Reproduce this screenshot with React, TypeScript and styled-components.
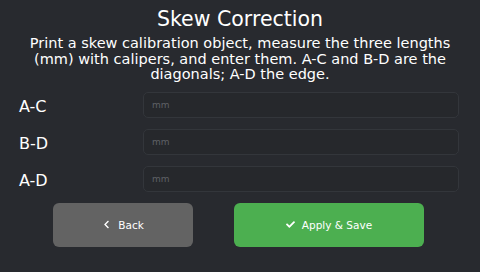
import React, { useState } from "react";
import styled, { createGlobalStyle } from "styled-components";
import { FaCheck, FaChevronLeft } from "react-icons/fa";

const GlobalStyle = createGlobalStyle`
  html, body {
    margin: 0;
    padding: 0;
    background: #282a2f;
    font-family: "DejaVu Sans", "Noto Sans", sans-serif;
    color: #ffffff;
  }
`;

const Screen = styled.div`
  width: 480px;
  height: 272px;
  box-sizing: border-box;
  display: flex;
  flex-direction: column;
  align-items: stretch;
  padding-top: 7px;
  overflow: hidden;
`;

const Title = styled.h1`
  margin: 0;
  font-size: 20.5px;
  font-weight: 400;
  line-height: 24px;
  text-align: center;
`;

const Description = styled.p`
  margin: 5px 0 0;
  padding: 0 24px;
  font-size: 14.5px;
  line-height: 15.6px;
  text-align: center;
`;

const Form = styled.div`
  display: grid;
  grid-template-columns: 124px 1fr;
  row-gap: 11px;
  align-items: center;
  padding: 0 21px 0 19px;
  margin-top: 9px;
`;

const Label = styled.label`
  font-size: 16px;
  padding-top: 4px;
`;

const Field = styled.input`
  box-sizing: border-box;
  height: 26px;
  width: 100%;
  background: #26282c;
  border: 1px solid #33363b;
  border-radius: 5px;
  padding: 0 8px;
  color: #ffffff;
  font-family: inherit;
  font-size: 9px;
  outline: none;

  &::placeholder {
    color: #5f6166;
  }
`;

const Actions = styled.div`
  display: flex;
  justify-content: center;
  gap: 41px;
  margin-top: 11px;
  padding-right: 3px;
`;

const Button = styled.button<{ $tone: "grey" | "green"; $width: number }>`
  width: ${(p) => p.$width}px;
  height: 44px;
  border: none;
  border-radius: 6px;
  background: ${(p) => (p.$tone === "green" ? "#4caf50" : "#636363")};
  color: #ffffff;
  font-family: inherit;
  font-size: 10.5px;
  display: flex;
  align-items: center;
  justify-content: center;
  gap: 7px;

  svg {
    width: 9px;
    height: 9px;
  }
`;

const fields = [
  { id: "ac", label: "A-C" },
  { id: "bd", label: "B-D" },
  { id: "ad", label: "A-D" },
];

const App: React.FC = () => {
  const [values, setValues] = useState<Record<string, string>>({});

  return (
    <>
      <GlobalStyle />
      <Screen>
        <Title>Skew Correction</Title>
        <Description>
          Print a skew calibration object, measure the three lengths (mm) with
          calipers, and enter them. A-C and B-D are the diagonals; A-D the edge.
        </Description>
        <Form>
          {fields.map((f) => (
            <React.Fragment key={f.id}>
              <Label htmlFor={f.id}>{f.label}</Label>
              <Field
                id={f.id}
                placeholder="mm"
                value={values[f.id] || ""}
                onChange={(e) => setValues({ ...values, [f.id]: e.target.value })}
              />
            </React.Fragment>
          ))}
        </Form>
        <Actions>
          <Button $tone="grey" $width={140}>
            <FaChevronLeft />
            Back
          </Button>
          <Button $tone="green" $width={190}>
            <FaCheck />
            Apply &amp; Save
          </Button>
        </Actions>
      </Screen>
    </>
  );
};

export default App;
